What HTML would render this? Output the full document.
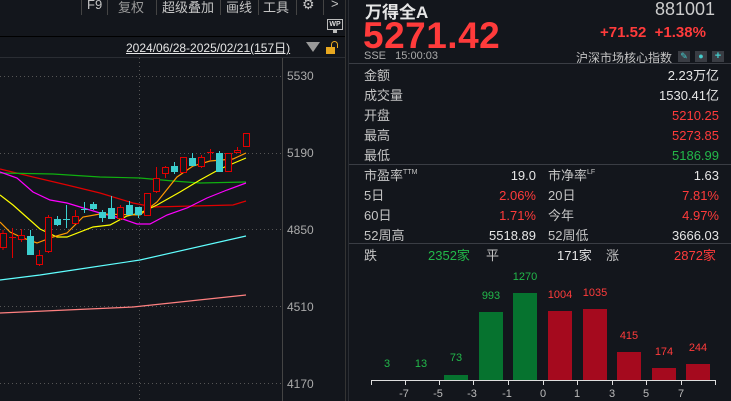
<!DOCTYPE html><html><head><meta charset="utf-8"><style>
*{margin:0;padding:0;box-sizing:border-box}
body{width:731px;height:401px;background:#13161c;overflow:hidden;position:relative;font-family:"Liberation Sans","Noto Sans CJK SC",sans-serif;color:#d0d0d0}
.a{position:absolute;white-space:nowrap}
.r{color:#ff3b3b}.g{color:#22b84a}.w{color:#e6e6e6}.l{color:#c4c4c4}
sup{font-size:7px;line-height:0;vertical-align:6px}
</style></head><body>
<div class="a" style="left:81px;top:0;width:1px;height:15px;background:#444"></div>
<div class="a" style="left:107px;top:0;width:1px;height:15px;background:#444"></div>
<div class="a" style="left:156px;top:0;width:1px;height:15px;background:#444"></div>
<div class="a" style="left:220px;top:0;width:1px;height:15px;background:#444"></div>
<div class="a" style="left:258px;top:0;width:1px;height:15px;background:#444"></div>
<div class="a" style="left:296px;top:0;width:1px;height:15px;background:#444"></div>
<div class="a" style="left:323px;top:0;width:1px;height:15px;background:#444"></div>
<div class="a l" style="left:87px;top:-3px;font-size:13px">F9</div>
<div class="a" style="left:118px;top:-3px;font-size:13px;color:#999">复权</div>
<div class="a l" style="left:162px;top:-3px;font-size:13px">超级叠加</div>
<div class="a l" style="left:226px;top:-3px;font-size:13px">画线</div>
<div class="a l" style="left:263px;top:-3px;font-size:13px">工具</div>
<div class="a l" style="left:302px;top:-4px;font-size:14px">⚙</div>
<div class="a l" style="left:331px;top:-4px;font-size:13px">&gt;</div>
<div class="a" style="left:327px;top:19px;width:16px;height:11px;border:1px solid #bbb;font-size:7px;color:#ddd;text-align:center;line-height:9px;font-weight:bold">WP</div>
<div class="a" style="left:333px;top:30px;width:4px;height:3px;background:#bbb"></div>
<div class="a" style="left:0;top:36px;width:345px;height:1px;background:#000"></div>
<div class="a w" style="left:126px;top:39px;font-size:12px;text-decoration:underline">2024/06/28-2025/02/21(157日)</div>
<div class="a" style="left:306px;top:42px;width:0;height:0;border-left:7px solid transparent;border-right:7px solid transparent;border-top:10px solid #999"></div>
<div class="a" style="left:326px;top:47px;width:9px;height:7px;background:#e8a820"></div>
<div class="a" style="left:331px;top:41px;width:7px;height:7px;border:1.5px solid #e8a820;border-bottom:none;border-radius:4px 4px 0 0"></div>
<div class="a" style="left:0;top:57px;width:345px;height:1px;background:#2a2d33"></div>
<div class="a" style="left:282px;top:58px;width:1px;height:343px;background:#444"></div>
<div class="a" style="left:345px;top:0;width:1px;height:401px;background:#333"></div>
<div class="a" style="left:348px;top:0;width:1px;height:401px;background:#2a2d33"></div>
<svg class="a" style="left:0;top:0" width="346" height="401">
<g stroke="#555" stroke-dasharray="1,3" stroke-width="1">
<line x1="0" y1="76.5" x2="282" y2="76.5"/><line x1="0" y1="153.5" x2="282" y2="153.5"/><line x1="0" y1="229.5" x2="282" y2="229.5"/><line x1="0" y1="306.5" x2="282" y2="306.5"/><line x1="0" y1="383.5" x2="282" y2="383.5"/><line x1="139.5" y1="58" x2="139.5" y2="401"/>
</g>
<g fill="none" stroke-width="1.2">
<polyline stroke="#e00000" points="0,169 33,177 67,185 100,193 133,203 143,205 153,207 233,205 246,201"/>
<polyline stroke="#10b010" points="0,173 53,174 100,177 140,178 173,181 200,183 246,182"/>
<polyline stroke="#ff00ff" points="0,172 17,178 33,192 50,200 67,203 100,213 120,218 137,224 150,224 167,215 187,208 207,198 227,190 246,183"/>
<polyline stroke="#ffff00" points="0,195 13,205 40,229 57,237 67,237 93,227 110,225 127,216 140,213 157,205 180,192 200,180 220,169 246,158"/>
<polyline stroke="#ff9900" points="0,222 10,232 23,238 37,243 53,237 67,233 83,217 100,214 140,215 157,202 177,177 193,166 210,161 233,159 246,153"/>
<polyline stroke="#60ffff" points="0,280 40,275 80,269 140,260 246,236"/>
<polyline stroke="#ff8080" points="0,313 133,307 246,295"/>
</g>
<g stroke-width="1">
<g stroke="#e00000" fill="#13161c">
<line x1="3" y1="230" x2="3" y2="250"/><rect x="0.5" y="233.5" width="6" height="14"/>
<line x1="12.5" y1="228" x2="12.5" y2="258"/><line x1="9" y1="237.5" x2="16" y2="237.5"/>
<line x1="21.5" y1="229" x2="21.5" y2="242"/><rect x="18.5" y="235.5" width="6" height="4"/>
<line x1="39.5" y1="250" x2="39.5" y2="266"/><rect x="36.5" y="255.5" width="6" height="9"/>
<line x1="48.5" y1="215" x2="48.5" y2="253"/><rect x="45.5" y="217.5" width="6" height="34"/>
<line x1="75.5" y1="210" x2="75.5" y2="223"/><rect x="72.5" y="216.5" width="6" height="7"/>
<line x1="120.5" y1="205" x2="120.5" y2="220"/><rect x="117.5" y="207.5" width="6" height="11"/>
<rect x="144.5" y="193.5" width="6" height="22"/>
<line x1="156.5" y1="167" x2="156.5" y2="193"/><rect x="153.5" y="178.5" width="6" height="13"/>
<line x1="165.5" y1="166" x2="165.5" y2="178"/><rect x="162.5" y="167.5" width="6" height="6"/>
<rect x="180.5" y="157.5" width="6" height="15"/>
<line x1="201.5" y1="155" x2="201.5" y2="168"/><rect x="198.5" y="157.5" width="6" height="9"/>
<line x1="210.5" y1="149" x2="210.5" y2="160"/><line x1="207" y1="152.5" x2="214" y2="152.5"/>
<rect x="225.5" y="153.5" width="6" height="18"/>
<line x1="237.5" y1="147" x2="237.5" y2="153"/><rect x="234.5" y="150.5" width="6" height="2"/>
<rect x="243.5" y="133.5" width="6" height="13"/>
</g>
<g stroke="#3ccfcf" fill="#3ccfcf">
<line x1="30.5" y1="230" x2="30.5" y2="255"/><rect x="27.5" y="236.5" width="6" height="18"/>
<line x1="57.5" y1="216" x2="57.5" y2="226"/><rect x="54.5" y="219.5" width="6" height="5"/>
<line x1="66.5" y1="205" x2="66.5" y2="228"/><line x1="63" y1="219.5" x2="70" y2="219.5"/>
<line x1="84.5" y1="202" x2="84.5" y2="213"/><line x1="81" y1="209.5" x2="88" y2="209.5"/>
<line x1="93.5" y1="202" x2="93.5" y2="210"/><rect x="90.5" y="204.5" width="6" height="4"/>
<line x1="102.5" y1="210" x2="102.5" y2="222"/><rect x="99.5" y="212.5" width="6" height="5"/>
<line x1="111.5" y1="196" x2="111.5" y2="218"/><rect x="108.5" y="208.5" width="6" height="10"/>
<line x1="129.5" y1="201" x2="129.5" y2="214"/><rect x="126.5" y="205.5" width="6" height="9"/>
<line x1="138.5" y1="207" x2="138.5" y2="218"/><rect x="135.5" y="207.5" width="6" height="7"/>
<line x1="174.5" y1="162" x2="174.5" y2="174"/><rect x="171.5" y="166.5" width="6" height="5"/>
<line x1="192.5" y1="153" x2="192.5" y2="166"/><rect x="189.5" y="158.5" width="6" height="7"/>
<line x1="219.5" y1="151" x2="219.5" y2="172"/><rect x="216.5" y="153.5" width="6" height="18"/>
</g></g>
<g fill="#aaa" font-size="12" font-family="Liberation Sans">
<text x="287" y="80">5530</text><text x="287" y="157">5190</text><text x="287" y="234">4850</text><text x="287" y="311">4510</text><text x="287" y="388">4170</text>
</g>
</svg>
<div class="a w" style="left:365px;top:-2px;font-size:17px;font-weight:bold">万得全A</div>
<div class="a" style="left:655px;top:-1px;font-size:18px;color:#ccc">881001</div>
<div class="a r" style="left:363px;top:15px;font-size:37px;font-weight:bold;letter-spacing:0.5px">5271.42</div>
<div class="a r" style="left:600px;top:24px;font-size:15px;font-weight:bold">+71.52&nbsp; +1.38%</div>
<div class="a" style="left:364px;top:50px;font-size:11px;color:#aaa">SSE&nbsp;&nbsp; 15:00:03</div>
<div class="a l" style="left:576px;top:49px;font-size:12px">沪深市场核心指数</div>
<div class="a" style="left:678px;top:51px;width:12px;height:11px;background:#3a3d44;color:#4cc;font-size:9px;text-align:center;line-height:11px">✎</div>
<div class="a" style="left:695px;top:51px;width:12px;height:11px;background:#3a3d44;color:#4cc;font-size:9px;text-align:center;line-height:11px">●</div>
<div class="a" style="left:712px;top:51px;width:12px;height:11px;background:#3a3d44;color:#4cc;font-size:11px;text-align:center;line-height:11px;font-weight:bold">+</div>
<div class="a" style="left:349px;top:63px;width:382px;height:1px;background:#3a3d44"></div>
<div class="a l" style="left:364px;top:66px;font-size:13px;line-height:20px">金额<br>成交量<br>开盘<br>最高<br>最低</div>
<div class="a" style="right:12px;top:66px;font-size:13px;line-height:20px;text-align:right"><span class="w">2.23万亿</span><br><span class="w">1530.41亿</span><br><span class="r">5210.25</span><br><span class="r">5273.85</span><br><span class="g">5186.99</span></div>
<div class="a" style="left:349px;top:164px;width:382px;height:1px;background:#3a3d44"></div>
<div class="a l" style="left:364px;top:166px;font-size:13px;line-height:20px">市盈率<sup>TTM</sup><br>5日<br>60日<br>52周高</div>
<div class="a" style="right:195px;top:166px;font-size:13px;line-height:20px;text-align:right"><span class="w">19.0</span><br><span class="r">2.06%</span><br><span class="r">1.71%</span><br><span class="w">5518.89</span></div>
<div class="a l" style="left:548px;top:166px;font-size:13px;line-height:20px">市净率<sup>LF</sup><br>20日<br>今年<br>52周低</div>
<div class="a" style="right:12px;top:166px;font-size:13px;line-height:20px;text-align:right"><span class="w">1.63</span><br><span class="r">7.81%</span><br><span class="r">4.97%</span><br><span class="w">3666.03</span></div>
<div class="a" style="left:349px;top:243px;width:382px;height:1px;background:#3a3d44"></div>
<div class="a l" style="left:364px;top:246px;font-size:13px;line-height:20px">跌</div>
<div class="a g" style="left:428px;top:246px;font-size:13px;line-height:20px">2352家</div>
<div class="a l" style="left:486px;top:246px;font-size:13px;line-height:20px">平</div>
<div class="a w" style="left:557px;top:246px;font-size:13px;line-height:20px">171家</div>
<div class="a l" style="left:606px;top:246px;font-size:13px;line-height:20px">涨</div>
<div class="a r" style="left:674px;top:246px;font-size:13px;line-height:20px">2872家</div>
<svg class="a" style="left:349px;top:260px" width="382" height="141">
<g transform="translate(-349,-260)">
<rect x="444" y="375" width="24" height="5" fill="#06732f"/>
<rect x="479" y="312" width="24" height="68" fill="#06732f"/>
<rect x="513" y="293" width="24" height="87" fill="#06732f"/>
<rect x="548" y="311" width="24" height="69" fill="#a50a1e"/>
<rect x="583" y="309" width="24" height="71" fill="#a50a1e"/>
<rect x="617" y="352" width="24" height="28" fill="#a50a1e"/>
<rect x="652" y="368" width="24" height="12" fill="#a50a1e"/>
<rect x="686" y="364" width="24" height="16" fill="#a50a1e"/>
<g stroke="#ddd" stroke-width="1"><line x1="371" y1="380.5" x2="716" y2="380.5"/>
<path d="M371.5 380v5M405.5 380v5M439.5 380v5M473.5 380v5M508.5 380v5M543.5 380v5M577.5 380v5M612.5 380v5M646.5 380v5M681.5 380v5M715.5 380v5"/></g>
<g fill="#bbb" font-size="11" text-anchor="middle" font-family="Liberation Sans">
<text x="404" y="397">-7</text><text x="438" y="397">-5</text><text x="472" y="397">-3</text><text x="507" y="397">-1</text><text x="543" y="397">0</text><text x="577" y="397">1</text><text x="612" y="397">3</text><text x="646" y="397">5</text><text x="681" y="397">7</text></g>
<g font-size="11" text-anchor="middle" font-family="Liberation Sans">
<text x="387" y="367" fill="#22b84a">3</text><text x="421" y="367" fill="#22b84a">13</text><text x="456" y="361" fill="#22b84a">73</text><text x="491" y="299" fill="#22b84a">993</text><text x="525" y="280" fill="#22b84a">1270</text>
<text x="560" y="298" fill="#ff3b3b">1004</text><text x="595" y="296" fill="#ff3b3b">1035</text><text x="629" y="339" fill="#ff3b3b">415</text><text x="664" y="355" fill="#ff3b3b">174</text><text x="698" y="351" fill="#ff3b3b">244</text></g>
</g></svg>
</body></html>
